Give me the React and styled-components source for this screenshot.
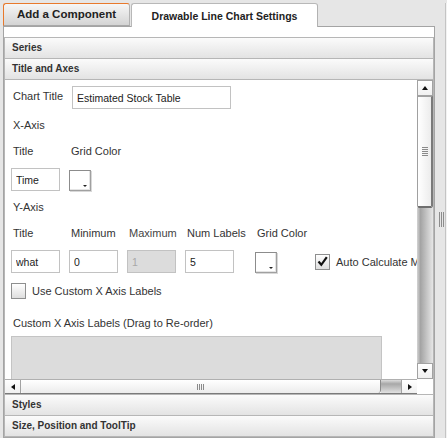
import React from "react";
import styled, { createGlobalStyle } from "styled-components";

const GlobalStyle = createGlobalStyle`
  html, body {
    margin: 0;
    padding: 0;
  }
  body {
    background: #e6e6e6;
    font-family: "Liberation Sans", Arial, sans-serif;
    font-size: 11px;
    color: #333333;
  }
  * {
    box-sizing: border-box;
  }
`;

const Page = styled.div`
  display: flex;
  width: 447px;
  height: 438px;
  overflow: hidden;
`;

const Main = styled.div`
  width: 435px;
  display: flex;
  flex-direction: column;
  padding-left: 3px;
`;

const TabBar = styled.div`
  display: flex;
  align-items: flex-end;
  height: 26px;
  gap: 1px;
`;

const Tab = styled.div`
  position: relative;
  z-index: 1;
  display: flex;
  align-items: center;
  justify-content: center;
  width: ${(p) => p.$width}px;
  height: ${(p) => (p.$active ? 24 : 23)}px;
  margin-bottom: ${(p) => (p.$active ? -1 : 0)}px;
  padding-bottom: ${(p) => (p.$active ? 0 : 2)}px;
  border: 1px solid #b2b2b2;
  border-bottom: ${(p) => (p.$active ? "none" : "1px solid #a8a8a8")};
  border-top-color: ${(p) => (p.$hover ? "#e8792c" : "#b8b8b8")};
  border-left-color: ${(p) => (p.$hover ? "#e8792c" : "#b8b8b8")};
  border-radius: 3px 3px 0 0;
  background: ${(p) =>
    p.$active ? "#ffffff" : "linear-gradient(#f6f6f6, #d4d4d4)"};
  font-weight: bold;
  font-size: ${(p) => p.$size}px;
  color: #222222;
  white-space: nowrap;
`;

const Panel = styled.div`
  flex: 1;
  display: flex;
  flex-direction: column;
  min-height: 0;
  border: 1px solid #a4a4a4;
  background: #ffffff;
  padding-top: 10px;
`;

const Accordion = styled.div`
  flex: 1;
  display: flex;
  flex-direction: column;
  min-height: 0;
  border: 1px solid #b6b6b6;
`;

const Header = styled.div`
  height: ${(p) => (p.$first ? 20 : 21)}px;
  line-height: 20px;
  padding-left: 7px;
  border-top: ${(p) => (p.$first ? "none" : "1px solid #b6b6b6")};
  background: linear-gradient(#fbfbfb, #e3e3e3);
  font-weight: bold;
  font-size: 10px;
  color: #333333;
  white-space: nowrap;
`;

const Body = styled.div`
  flex: 1;
  display: flex;
  flex-direction: column;
  min-height: 0;
  border-top: 1px solid #b6b6b6;
`;

const ScrollRow = styled.div`
  flex: 1;
  display: flex;
  min-height: 0;
`;

const Viewport = styled.div`
  flex: 1;
  overflow: hidden;
  padding: 6px 0 0 6px;
  white-space: nowrap;
`;

const Row = styled.div`
  display: flex;
  align-items: center;
`;

const Label = styled.div`
  height: 16px;
  line-height: 16px;
  padding-left: 2px;
  width: ${(p) => (p.$width ? `${p.$width}px` : "auto")};
  margin-top: ${(p) => p.$top || 0}px;
  margin-bottom: ${(p) => p.$bottom || 0}px;
  color: ${(p) => (p.$muted ? "#444444" : "#333333")};
`;

const TextInput = styled.input`
  width: ${(p) => p.$width}px;
  height: 23px;
  padding: 0 4px;
  border: 1px solid #c2c2c2;
  background: ${(p) => (p.disabled ? "#dcdcdc" : "#ffffff")};
  font-family: "Liberation Sans", Arial, sans-serif;
  font-size: 10.5px;
  color: ${(p) => (p.disabled ? "#a8a8a8" : "#222222")};
  outline: none;
`;

const FieldGrid = styled.div`
  display: grid;
  grid-template-columns: ${(p) => p.$cols};
  grid-template-rows: 16px 23px;
  row-gap: 9px;
  align-items: center;
  margin-top: 10px;
`;

const ColorPicker = styled.div`
  position: relative;
  width: 22px;
  height: 21px;
  margin-top: 1px;
  border: 1px solid #8c8c8c;
  border-right-color: #a0a0a0;
  border-bottom-color: #a0a0a0;
  box-shadow: inset -1px -1px 0 #e4e4e4, 1px 1px 0 #d8d8d8;
  background: #ffffff;

  &::after {
    content: "";
    position: absolute;
    right: 3px;
    bottom: 3px;
    border-left: 2px solid transparent;
    border-right: 2px solid transparent;
    border-top: 2px solid #222222;
  }
`;

const CheckWrap = styled.label`
  display: flex;
  align-items: center;
  gap: ${(p) => p.$gap}px;
  margin-top: ${(p) => p.$top || 0}px;
  color: #333333;
`;

const CheckBox = styled.span`
  display: flex;
  align-items: center;
  justify-content: center;
  width: 15px;
  height: 16px;
  border: 1px solid #8e8f8f;
  background: linear-gradient(#ffffff, #dedede);
`;

const DropList = styled.div`
  width: 371px;
  height: 60px;
  margin-top: 5px;
  border: 1px solid #c4c4c4;
  background: #dcdcdc;
`;

const VScroll = styled.div`
  width: 16px;
  display: flex;
  flex-direction: column;
`;

const Arrow = styled.div`
  position: relative;
  width: 16px;
  height: 16px;
  flex-shrink: 0;
  border: 1px solid #a2a2a2;
  background: linear-gradient(#ffffff, #f0f0f0);

  &::after {
    content: "";
    position: absolute;
    left: 50%;
    top: 50%;
    transform: translate(-50%, -50%);
    ${(p) =>
      p.$dir === "up"
        ? "border-left: 3px solid transparent; border-right: 3px solid transparent; border-bottom: 4px solid #111;"
        : p.$dir === "down"
        ? "border-left: 3px solid transparent; border-right: 3px solid transparent; border-top: 4px solid #111;"
        : p.$dir === "left"
        ? "border-top: 3px solid transparent; border-bottom: 3px solid transparent; border-right: 4px solid #111;"
        : "border-top: 3px solid transparent; border-bottom: 3px solid transparent; border-left: 4px solid #111;"}
  }
`;

const VThumb = styled.div`
  height: 112px;
  display: flex;
  align-items: center;
  justify-content: center;
  border: 1px solid #a0a0a0;
  border-right: 2px solid #7a7a7a;
  border-bottom: 2px solid #6e6e6e;
  border-radius: 0 0 2px 2px;
  background: linear-gradient(90deg, #ffffff, #ececec);
`;

const VTrack = styled.div`
  flex: 1;
  background: linear-gradient(90deg, #d4d4d4 0%, #a4a4a4 22%, #c4c4c4 60%, #e6e6e6 100%);
`;

const Grip = styled.span`
  width: ${(p) => (p.$vertical ? 6 : 7)}px;
  height: ${(p) => (p.$vertical ? 9 : 6)}px;
  background: ${(p) =>
    p.$vertical
      ? "repeating-linear-gradient(180deg, #8a8a8a 0 1px, transparent 1px 2px)"
      : "repeating-linear-gradient(90deg, #8a8a8a 0 1px, transparent 1px 2px)"};
`;

const HRow = styled.div`
  display: flex;
  height: 15px;
`;

const HScroll = styled.div`
  flex: 1;
  display: flex;
  border-top: 1px solid #b0b0b0;
  border-bottom: 1px solid #7a7a7a;
`;

const HArrow = styled(Arrow)`
  height: 13px;
  border: none;
  border-left: ${(p) => (p.$dir === "right" ? "1px solid #a2a2a2" : "none")};
  border-right: ${(p) => (p.$dir === "left" ? "1px solid #a2a2a2" : "none")};
`;

const HThumb = styled.div`
  width: 360px;
  display: flex;
  align-items: center;
  justify-content: center;
  border-right: 1px solid #8a8a8a;
  border-radius: 0 0 3px 3px;
  background: linear-gradient(#ffffff, #ececec);
`;

const HTrack = styled.div`
  flex: 1;
  background: linear-gradient(180deg, #dcdcdc 0%, #a8a8a8 30%, #c8c8c8 70%, #e2e2e2 100%);
`;

const Corner = styled.div`
  width: 16px;
  background: #ffffff;
`;

const Splitter = styled.div`
  width: 10px;
  display: flex;
  align-items: center;
  justify-content: center;
  padding-left: 2px;
`;

const SplitGrip = styled.span`
  width: 5px;
  height: 15px;
  background: repeating-linear-gradient(90deg, #8c8c8c 0 1px, transparent 1px 2px);
`;

const EdgeStrip = styled.div`
  flex: 1;
  margin-top: 3px;
  border-left: 1px solid #c4c4c4;
  background: #f2f2f2;
`;

function Check({ checked }) {
  return (
    <CheckBox>
      {checked && (
        <svg width="11" height="11" viewBox="0 0 11 11">
          <path d="M1.5 5.5 L4.3 8.8 L9.8 1.2" fill="none" stroke="#111" strokeWidth="2.2" />
        </svg>
      )}
    </CheckBox>
  );
}

export default function App() {
  return (
    <>
      <GlobalStyle />
      <Page>
        <Main>
          <TabBar>
            <Tab $width={127} $size={11.5} $hover>
              Add a Component
            </Tab>
            <Tab $width={187} $size={10.5} $active>
              Drawable Line Chart Settings
            </Tab>
          </TabBar>
          <Panel>
            <Accordion>
              <Header $first>Series</Header>
              <Header>Title and Axes</Header>
              <Body>
                <ScrollRow>
                  <Viewport>
                    <Row>
                      <Label $width={61} $bottom={3}>Chart Title</Label>
                      <TextInput $width={159} defaultValue="Estimated Stock Table" />
                    </Row>

                    <Label $top={8}>X-Axis</Label>
                    <FieldGrid $cols="58px 60px">
                      <Label>Title</Label>
                      <Label>Grid Color</Label>
                      <TextInput $width={49} defaultValue="Time" />
                      <ColorPicker />
                    </FieldGrid>

                    <Label $top={8}>Y-Axis</Label>
                    <FieldGrid $cols="58px 58px 58px 70px 60px auto">
                      <Label>Title</Label>
                      <Label>Minimum</Label>
                      <Label $muted>Maximum</Label>
                      <Label>Num Labels</Label>
                      <Label>Grid Color</Label>
                      <span />
                      <TextInput $width={49} defaultValue="what" />
                      <TextInput $width={49} defaultValue="0" />
                      <TextInput $width={49} defaultValue="1" disabled />
                      <TextInput $width={49} defaultValue="5" />
                      <ColorPicker />
                      <CheckWrap $gap={6}>
                        <Check checked />
                        Auto Calculate Min/Max
                      </CheckWrap>
                    </FieldGrid>

                    <CheckWrap $gap={6} $top={10}>
                      <Check />
                      Use Custom X Axis Labels
                    </CheckWrap>

                    <Label $top={16}>Custom X Axis Labels (Drag to Re-order)</Label>
                    <DropList />
                  </Viewport>
                  <VScroll>
                    <Arrow $dir="up" />
                    <VThumb>
                      <Grip $vertical />
                    </VThumb>
                    <VTrack />
                    <Arrow $dir="down" />
                  </VScroll>
                </ScrollRow>
                <HRow>
                  <HScroll>
                    <HArrow $dir="left" />
                    <HThumb>
                      <Grip />
                    </HThumb>
                    <HTrack />
                    <HArrow $dir="right" />
                  </HScroll>
                  <Corner />
                </HRow>
              </Body>
              <Header>Styles</Header>
              <Header>Size, Position and ToolTip</Header>
            </Accordion>
          </Panel>
        </Main>
        <Splitter>
          <SplitGrip />
        </Splitter>
        <EdgeStrip />
      </Page>
    </>
  );
}
